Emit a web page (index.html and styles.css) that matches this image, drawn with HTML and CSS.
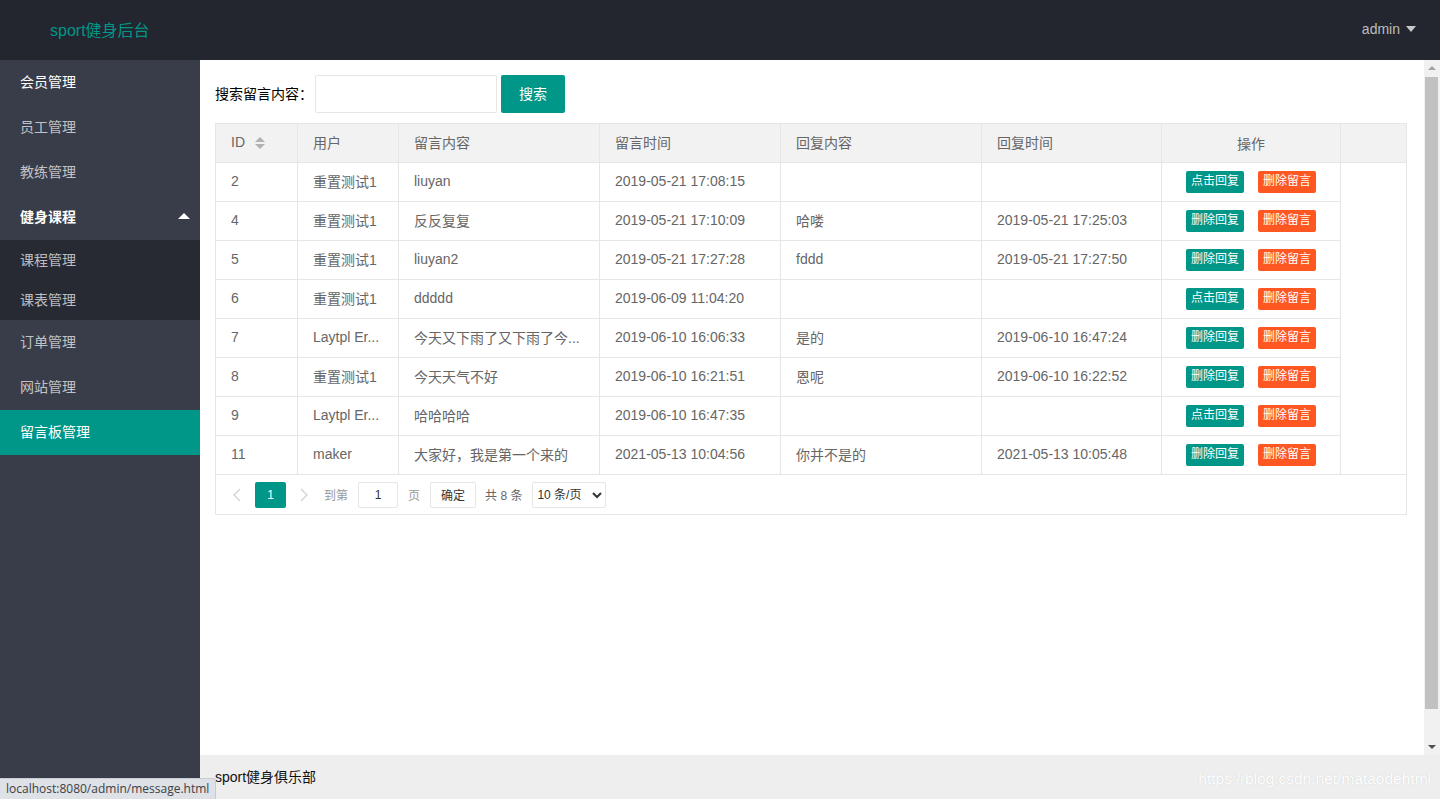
FILE: index.html
```html
<!DOCTYPE html>
<html lang="zh">
<head>
    <meta charset="UTF-8">
    <meta name="viewport" content="width=device-width, initial-scale=1.0">
    <title>留言板管理 - sport健身后台</title>
    <link rel="stylesheet" href="styles.css">
</head>
<body>
<div class="layout">
    <!-- Top header -->
    <div class="header">
        <div class="logo">sport健身后台</div>
        <div class="user">admin <span class="caret-down"></span></div>
    </div>

    <div class="main">
        <!-- Side menu -->
        <div class="side">
            <a class="nav-item hover">会员管理</a>
            <a class="nav-item">员工管理</a>
            <a class="nav-item">教练管理</a>
            <a class="nav-item open">健身课程 <span class="caret-up"></span></a>
            <div class="nav-child">
                <a>课程管理</a>
                <a>课表管理</a>
            </div>
            <a class="nav-item">订单管理</a>
            <a class="nav-item">网站管理</a>
            <a class="nav-item active">留言板管理</a>
        </div>

        <div class="right">
            <div class="body-wrap">
                <div class="body">
                    <!-- Search -->
                    <div class="search">
                        <label>搜索留言内容：</label>
                        <input type="text" class="search-input">
                        <button class="btn">搜索</button>
                    </div>

                    <!-- Message table -->
                    <div class="table-box">
                        <table class="table">
                            <colgroup>
                                <col style="width:82px">
                                <col style="width:101px">
                                <col style="width:201px">
                                <col style="width:181px">
                                <col style="width:201px">
                                <col style="width:180px">
                                <col style="width:179px">
                                <col>
                            </colgroup>
                            <thead>
                                <tr>
                                    <th>ID <span class="sort"><i class="up"></i><i class="down"></i></span></th>
                                    <th>用户</th>
                                    <th>留言内容</th>
                                    <th>留言时间</th>
                                    <th>回复内容</th>
                                    <th>回复时间</th>
                                    <th class="center">操作</th>
                                    <th></th>
                                </tr>
                            </thead>
                            <tbody>
                                <tr>
                                    <td>2</td><td>重置测试1</td><td>liuyan</td><td>2019-05-21 17:08:15</td><td></td><td></td>
                                    <td class="center"><span class="btn-xs">点击回复</span><span class="btn-xs danger">删除留言</span></td><td></td>
                                </tr>
                                <tr>
                                    <td>4</td><td>重置测试1</td><td>反反复复</td><td>2019-05-21 17:10:09</td><td>哈喽</td><td>2019-05-21 17:25:03</td>
                                    <td class="center"><span class="btn-xs">删除回复</span><span class="btn-xs danger">删除留言</span></td><td></td>
                                </tr>
                                <tr>
                                    <td>5</td><td>重置测试1</td><td>liuyan2</td><td>2019-05-21 17:27:28</td><td>fddd</td><td>2019-05-21 17:27:50</td>
                                    <td class="center"><span class="btn-xs">删除回复</span><span class="btn-xs danger">删除留言</span></td><td></td>
                                </tr>
                                <tr>
                                    <td>6</td><td>重置测试1</td><td>ddddd</td><td>2019-06-09 11:04:20</td><td></td><td></td>
                                    <td class="center"><span class="btn-xs">点击回复</span><span class="btn-xs danger">删除留言</span></td><td></td>
                                </tr>
                                <tr>
                                    <td>7</td><td>Laytpl Er...</td><td>今天又下雨了又下雨了今...</td><td>2019-06-10 16:06:33</td><td>是的</td><td>2019-06-10 16:47:24</td>
                                    <td class="center"><span class="btn-xs">删除回复</span><span class="btn-xs danger">删除留言</span></td><td></td>
                                </tr>
                                <tr>
                                    <td>8</td><td>重置测试1</td><td>今天天气不好</td><td>2019-06-10 16:21:51</td><td>恩呢</td><td>2019-06-10 16:22:52</td>
                                    <td class="center"><span class="btn-xs">删除回复</span><span class="btn-xs danger">删除留言</span></td><td></td>
                                </tr>
                                <tr>
                                    <td>9</td><td>Laytpl Er...</td><td>哈哈哈哈</td><td>2019-06-10 16:47:35</td><td></td><td></td>
                                    <td class="center"><span class="btn-xs">点击回复</span><span class="btn-xs danger">删除留言</span></td><td></td>
                                </tr>
                                <tr>
                                    <td>11</td><td>maker</td><td>大家好，我是第一个来的</td><td>2021-05-13 10:04:56</td><td>你并不是的</td><td>2021-05-13 10:05:48</td>
                                    <td class="center"><span class="btn-xs">删除回复</span><span class="btn-xs danger">删除留言</span></td><td></td>
                                </tr>
                            </tbody>
                        </table>

                        <!-- Pager -->
                        <div class="pager">
                            <span class="arrow"><svg width="8" height="14" viewBox="0 0 8 14"><path d="M7 1 L1 7 L7 13" fill="none" stroke="#d2d2d2" stroke-width="1.3"/></svg></span>
                            <span class="curr">1</span>
                            <span class="arrow"><svg width="8" height="14" viewBox="0 0 8 14"><path d="M1 1 L7 7 L1 13" fill="none" stroke="#d2d2d2" stroke-width="1.3"/></svg></span>
                            <span class="skip">到第</span>
                            <input class="page-input" type="text" value="1">
                            <span class="skip unit">页</span>
                            <button class="page-btn">确定</button>
                            <span class="count">共 8 条</span>
                            <select class="limits">
                                <option>10 条/页</option>
                                <option>20 条/页</option>
                            </select>
                        </div>
                    </div>
                </div>

                <!-- Scrollbar of the body frame -->
                <div class="scrollbar">
                    <div class="sb-btn"><span class="sb-up"></span></div>
                    <div class="sb-track"><div class="sb-thumb"></div></div>
                    <div class="sb-btn"><span class="sb-down"></span></div>
                </div>
            </div>

            <div class="footer">
                sport健身俱乐部
                <span class="watermark">https://blog.csdn.net/mataodehtml</span>
            </div>
        </div>
    </div>
</div>

<div class="status">localhost:8080/admin/message.html</div>
</body>
</html>
```

FILE: styles.css
```css
/* Page */
body {
    margin: 0;
    font-family: "Liberation Sans", "Noto Sans CJK SC", sans-serif;
    font-size: 14px;
    color: #333;
}

.layout {
    display: flex;
    flex-direction: column;
    height: 100vh;
    overflow: hidden;
}

/* Header */
.header {
    height: 60px;
    flex-shrink: 0;
    box-sizing: border-box;
    padding: 0 24px 2px 50px;
    background: #23262e;
    display: flex;
    align-items: center;
    justify-content: space-between;
}

.logo {
    color: #009688;
    font-size: 16px;
}

.user {
    color: rgba(255, 255, 255, 0.7);
    font-size: 14px;
    display: flex;
    align-items: center;
}

.caret-down {
    display: inline-block;
    margin-left: 6px;
    border-left: 5px solid transparent;
    border-right: 5px solid transparent;
    border-top: 6px solid rgba(255, 255, 255, 0.75);
}

.main {
    flex: 1;
    display: flex;
    min-height: 0;
}

/* Side menu */
.side {
    width: 200px;
    flex-shrink: 0;
    background: #393d49;
}

.side a {
    display: flex;
    align-items: center;
    box-sizing: border-box;
    padding: 0 20px 3px;
    color: rgba(255, 255, 255, 0.7);
    cursor: pointer;
}

.nav-item {
    height: 45px;
}

.nav-item.hover,
.nav-item.open {
    color: #fff !important;
}

.nav-item.open {
    justify-content: space-between;
    font-weight: bold;
    padding-right: 10px !important;
}

.caret-up {
    border-left: 6px solid transparent;
    border-right: 6px solid transparent;
    border-bottom: 6px solid #fff;
}

.nav-child {
    background: rgba(0, 0, 0, 0.3);
}

.nav-child a {
    height: 40px;
}

.nav-item.active {
    background: #009688;
    color: #fff !important;
}

/* Right side */
.right {
    flex: 1;
    display: flex;
    flex-direction: column;
    min-width: 0;
}

.body-wrap {
    flex: 1;
    display: flex;
    min-height: 0;
    background: #fff;
}

.body {
    flex: 1;
    min-width: 0;
    padding: 15px 17px 15px 15px;
    overflow: hidden;
}

/* Fake scrollbar */
.scrollbar {
    width: 16px;
    flex-shrink: 0;
    display: flex;
    flex-direction: column;
    background: #f1f1f1;
}

.sb-btn {
    height: 16px;
    display: flex;
    align-items: center;
    justify-content: center;
}

.sb-up {
    border-left: 4px solid transparent;
    border-right: 4px solid transparent;
    border-bottom: 4px solid #a3a3a3;
}

.sb-down {
    border-left: 4px solid transparent;
    border-right: 4px solid transparent;
    border-top: 4px solid #505050;
}

.sb-track {
    flex: 1;
    padding: 1px 2px 0 1px;
}

.sb-thumb {
    height: 632px;
    background: #c1c1c1;
}

/* Search row */
.search {
    display: flex;
    align-items: center;
}

.search label {
    color: #000;
    padding-bottom: 3px;
}

.search-input {
    width: 182px;
    height: 38px;
    box-sizing: border-box;
    margin-left: 2px;
    border: 1px solid #e6e6e6;
    border-radius: 2px;
    padding: 0 10px;
}

.btn {
    height: 38px;
    margin-left: 4px;
    padding: 0 18px 2px;
    border: none;
    border-radius: 2px;
    background: #009688;
    color: #fff;
    font-family: inherit;
    font-size: 14px;
}

/* Table */
.table-box {
    margin-top: 10px;
    border: 1px solid #e6e6e6;
}

.table {
    width: 100%;
    table-layout: fixed;
    border-collapse: separate;
    border-spacing: 0;
}

.table th,
.table td {
    height: 39px;
    box-sizing: border-box;
    padding: 0 15px 2px;
    border-right: 1px solid #e6e6e6;
    border-bottom: 1px solid #e6e6e6;
    text-align: left;
    font-weight: normal;
    color: #666;
    white-space: nowrap;
    overflow: hidden;
}

.table th {
    background: #f2f2f2;
}

.table th:last-child {
    border-right: none;
}

.table td:last-child {
    border-right: none;
    border-bottom: none;
}

/* last row line runs across the whole box, above the pager */
.table tbody tr:last-child td {
    border-bottom: 1px solid #e6e6e6;
}

.table .center {
    text-align: center;
    padding-bottom: 0;
}

.sort {
    display: inline-flex;
    flex-direction: column;
    vertical-align: middle;
    margin-left: 6px;
    gap: 2px;
}

.sort .up {
    border-left: 5px solid transparent;
    border-right: 5px solid transparent;
    border-bottom: 5px solid #b2b2b2;
}

.sort .down {
    border-left: 5px solid transparent;
    border-right: 5px solid transparent;
    border-top: 5px solid #b2b2b2;
}

.btn-xs {
    display: inline-block;
    height: 22px;
    line-height: 21px;
    padding: 0 5px;
    font-size: 12px;
    color: #fff;
    background: #009688;
    border-radius: 2px;
}

.btn-xs + .btn-xs {
    margin-left: 14px;
}

.btn-xs.danger {
    background: #ff5722;
}

/* Pager */
.pager {
    height: 39px;
    display: flex;
    align-items: center;
    padding-left: 15px;
    font-size: 12px;
    color: #999;
}

.arrow {
    display: flex;
    width: 12px;
    justify-content: center;
}

.curr {
    width: 31px;
    height: 26px;
    line-height: 26px;
    margin: 0 12px;
    text-align: center;
    background: #009688;
    color: #fff;
    border-radius: 2px;
}

.skip {
    margin-left: 14px;
}

.skip.unit {
    margin-left: 10px;
}

.page-input {
    width: 40px;
    height: 26px;
    box-sizing: border-box;
    margin-left: 10px;
    border: 1px solid #e6e6e6;
    border-radius: 2px;
    text-align: center;
    font-size: 12px;
    color: #333;
}

.page-btn {
    height: 26px;
    margin-left: 10px;
    padding: 0 10px;
    background: #fff;
    border: 1px solid #e6e6e6;
    border-radius: 2px;
    font-family: inherit;
    font-size: 12px;
    color: #333;
}

.count {
    margin-left: 9px;
    color: #666;
}

.limits {
    height: 26px;
    margin-left: 10px;
    width: 74px;
    border: 1px solid #e6e6e6;
    border-radius: 2px;
    background: #fff;
    font-family: inherit;
    font-size: 12px;
    color: #333;
}

/* Footer */
.footer {
    height: 44px;
    flex-shrink: 0;
    line-height: 44px;
    padding: 0 15px;
    background: #eee;
    color: #111;
    position: relative;
}

.watermark {
    position: absolute;
    right: 9px;
    top: 2px;
    font-size: 15.5px;
    color: #fff;
    text-shadow: 0 0 1px #c8c8c8;
}

/* Browser status bubble */
.status {
    position: fixed;
    left: 0;
    bottom: 0;
    height: 20px;
    line-height: 20px;
    padding: 0 6px;
    background: #dee1e6;
    border-top: 1px solid #c8ccd2;
    border-right: 1px solid #c8ccd2;
    border-top-right-radius: 3px;
    font-family: "Open Sans", "Liberation Sans", sans-serif;
    font-size: 12px;
    color: #3c4043;
}
```
